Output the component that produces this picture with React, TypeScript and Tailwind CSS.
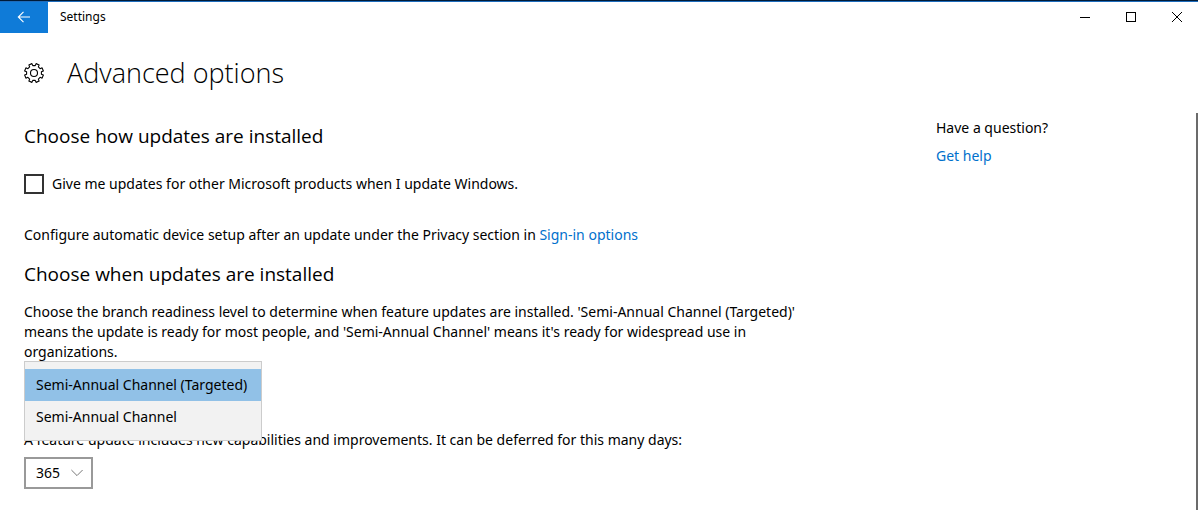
import React, { useState } from 'react';

const channels = ['Semi-Annual Channel (Targeted)', 'Semi-Annual Channel'];

function TitleBar() {
  return (
    <header className="flex h-[33px] items-stretch overflow-hidden border-t border-[#001b38]">
      <button type="button" aria-label="Back" className="flex w-12 items-center justify-center border-t border-[#1d6cbc] bg-[#0f7bd8] pb-0.5 text-white">
        <svg width="14" height="12" viewBox="0 0 14 12" fill="none" stroke="currentColor" strokeWidth="1.1">
          <path d="M13 6H1.5M6.5 0.8L1.3 6l5.2 5.2" />
        </svg>
      </button>
      <div className="-mr-0.5 flex flex-1 items-center border-t border-[#1d6cbc] pb-0.5 pl-3">
        <span className="flex-1 text-xs">Settings</span>
        <button type="button" aria-label="Minimize" className="flex h-full w-[46px] items-center justify-center">
          <svg width="10" height="10" viewBox="0 0 10 10" stroke="currentColor" shapeRendering="crispEdges">
            <path d="M0 5.5h10" />
          </svg>
        </button>
        <button type="button" aria-label="Maximize" className="flex h-full w-[46px] items-center justify-center">
          <svg width="10" height="10" viewBox="0 0 10 10" fill="none" stroke="currentColor" shapeRendering="crispEdges">
            <path d="M0.5 0.5h9v9h-9z" />
          </svg>
        </button>
        <button type="button" aria-label="Close" className="flex h-full w-[46px] items-center justify-center">
          <svg width="10" height="10" viewBox="0 0 10 10" stroke="currentColor">
            <path d="M0 0l10 10M10 0L0 10" />
          </svg>
        </button>
      </div>
    </header>
  );
}

function GearIcon() {
  // Eight teeth, each with a short flat top and a flat valley between them
  const points: string[] = [];
  for (let i = 0; i < 8; i++) {
    [
      [-13, 7.5],
      [-10, 9.6],
      [10, 9.6],
      [13, 7.5],
    ].forEach(([offset, radius]) => {
      const angle = ((i * 45 + 22.5 + offset) * Math.PI) / 180;
      points.push(`${(10 + radius * Math.cos(angle)).toFixed(2)},${(10 + radius * Math.sin(angle)).toFixed(2)}`);
    });
  }
  return (
    <svg width="20" height="20" viewBox="0 0 20 20" fill="none" stroke="currentColor" strokeWidth="1.1" strokeLinejoin="round" aria-hidden="true">
      <polygon points={points.join(' ')} />
      <circle cx="10" cy="10" r="3.5" />
    </svg>
  );
}

function ChannelPicker() {
  const [selected, setSelected] = useState(channels[0]);

  return (
    <div className="relative h-8">
      <ul
        role="listbox"
        aria-label="Branch readiness level"
        className="absolute -top-px left-0 h-20 w-[238px] border border-[#cccccc] bg-[#f2f2f2] pt-[7px]"
      >
        {channels.map((channel) => (
          <li key={channel} role="presentation">
            <button
              type="button"
              role="option"
              aria-selected={channel === selected}
              onClick={() => setSelected(channel)}
              className={`flex h-8 w-full items-center pl-[11px] whitespace-nowrap ${channel === selected ? 'bg-[#91c1e7]' : ''}`}
            >
              {channel}
            </button>
          </li>
        ))}
      </ul>
    </div>
  );
}

function DeferralSelect() {
  return (
    <div className="relative w-fit">
      <select
        id="defer-days"
        defaultValue="365"
        className="h-8 w-[69px] appearance-none border-2 border-[#999999] bg-white pl-[10px]"
      >
        <option>0</option>
        <option>30</option>
        <option>180</option>
        <option>365</option>
      </select>
      <svg
        className="pointer-events-none absolute top-3 right-[10px] text-[#777777]"
        width="12"
        height="8"
        viewBox="0 0 12 8"
        fill="none"
        stroke="currentColor"
      >
        <path d="M0.4 1L6 6.6L11.6 1" />
      </svg>
    </div>
  );
}

export default function App() {
  return (
    <div className="flex min-h-screen flex-col bg-white font-['Noto_Sans',sans-serif] text-sm leading-5 text-black">
      <TitleBar />

      <div className="flex h-20 items-center gap-[23px] pl-6">
        <GearIcon />
        <h1 className="font-['Open_Sans',sans-serif] text-[27px] leading-9 font-light">Advanced options</h1>
      </div>

      <div className="flex flex-1">
        <main className="flex-1 pl-6">
          <h2 className="mt-[9px] font-['Open_Sans',sans-serif] text-[19px] leading-7">Choose how updates are installed</h2>
          <label className="mt-6 flex w-fit items-center gap-2">
            <input type="checkbox" className="size-5 appearance-none border-2 border-[#333333] checked:bg-[#0f7bd8]" />
            Give me updates for other Microsoft products when I update Windows.
          </label>
          <p className="mt-[31px]">
            Configure automatic device setup after an update under the Privacy section in{' '}
            <a href="#sign-in" className="text-[#0070cc]">Sign-in options</a>
          </p>

          <h2 className="mt-[15px] font-['Open_Sans',sans-serif] text-[19px] leading-7">Choose when updates are installed</h2>
          <p className="mt-3.5 max-w-[800px]">
            Choose the branch readiness level to determine when feature updates are installed. 'Semi-Annual Channel (Targeted)'
            means the update is ready for most people, and 'Semi-Annual Channel' means it's ready for widespread use in
            organizations.
          </p>
          <ChannelPicker />

          <label htmlFor="defer-days" className="mt-9 mb-[7px] block">
            A feature update includes new capabilities and improvements. It can be deferred for this many days:
          </label>
          <DeferralSelect />
        </main>

        <aside className="w-[260px] pt-[5px]">
          <p>Have a question?</p>
          <a href="#help" className="mt-2 inline-block text-[#0070cc]">Get help</a>
        </aside>
        <div className="w-0.5 bg-[#6b6b6b]" />
      </div>
    </div>
  );
}
